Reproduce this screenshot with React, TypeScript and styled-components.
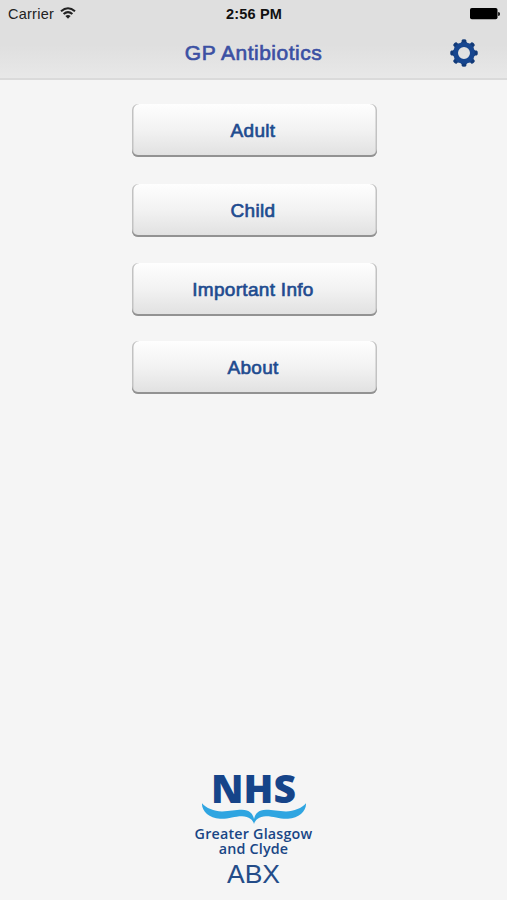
import React from "react";
import styled, { createGlobalStyle } from "styled-components";

const GlobalStyle = createGlobalStyle`
  * { box-sizing: border-box; }
  html, body { margin: 0; padding: 0; background: #f5f5f5; }
  body { font-family: "Liberation Sans", Arial, sans-serif; }
`;

const Screen = styled.div`
  width: 507px;
  height: 900px;
  display: flex;
  flex-direction: column;
  background: #f5f5f5;
  overflow: hidden;
`;

const Header = styled.header`
  height: 80px;
  flex: none;
  background: linear-gradient(#dfdfdf 0, #dfdfdf 45px, #e8e8e8 78px);
  border-bottom: 2px solid #dadada;
`;

const StatusBar = styled.div`
  height: 27px;
  padding: 1px 7px 0 8px;
  display: grid;
  grid-template-columns: 1fr auto 1fr;
  align-items: center;
  font-size: 14.5px;
  line-height: 26px;
`;

const Carrier = styled.div`
  display: flex;
  align-items: center;
  gap: 6px;
  color: #222;
  letter-spacing: 0.25px;

  svg {
    margin-bottom: 2px;
  }
`;

const Clock = styled.div`
  font-weight: 700;
  color: #111;
  letter-spacing: 0.2px;
`;

const BatterySlot = styled.div`
  display: flex;
  justify-content: flex-end;
`;

const NavBar = styled.div`
  height: 51px;
  padding: 0 29px 2px 29px;
  display: grid;
  grid-template-columns: 1fr auto 1fr;
  align-items: center;
`;

const Title = styled.h1`
  grid-column: 2;
  margin: 0;
  padding-top: 1px;
  font-size: 21px;
  line-height: 50px;
  font-weight: 400;
  letter-spacing: 0.5px;
  color: #3b50a3;
  -webkit-text-stroke: 0.65px #3b50a3;
`;

const SettingsButton = styled.button`
  justify-self: end;
  display: flex;
  padding: 0;
  border: 0;
  background: none;
`;

const Menu = styled.nav`
  flex: 1;
  display: flex;
  flex-direction: column;
  align-items: center;
  padding-top: 24px;
`;

const MenuButton = styled.button<{ $gap: number }>`
  width: 245px;
  height: 53px;
  margin-bottom: ${(p) => p.$gap}px;
  margin-left: 1px;
  padding: 0 2px 0 0;
  border: 0;
  border-radius: 6px;
  background: linear-gradient(#fefefe, #f2f2f2 50%, #e0e0e0);
  box-shadow: inset 0 -2px 0 #929292, inset 1.5px 0 0.5px #c2c2c2, inset -1.5px 0 0.5px #c2c2c2;
  font-family: inherit;
  font-size: 19px;
  line-height: 53px;
  letter-spacing: 0.3px;
  color: #1e4b8f;
  -webkit-text-stroke: 0.65px #1e4b8f;
`;

const Brand = styled.footer`
  height: 133px;
  flex: none;
  display: flex;
  flex-direction: column;
  align-items: center;
  color: #194685;
`;

const Nhs = styled.div`
  height: 36px;
  font: 800 39px/42px "Open Sans", sans-serif;
  letter-spacing: 0.1px;
  color: #164489;
`;

const Board = styled.div`
  margin-top: 1px;
  display: flex;
  flex-direction: column;
  align-items: center;
  font: 600 14.3px/15px "Open Sans", sans-serif;
  letter-spacing: 0.2px;
`;

const AppCode = styled.div`
  font-size: 26.5px;
  line-height: 36px;
  color: #244c88;
`;

const buttons = [
  { label: "Adult", gap: 27 },
  { label: "Child", gap: 26 },
  { label: "Important Info", gap: 25 },
  { label: "About", gap: 0 },
];

const WifiIcon = () => (
  <svg width="16" height="12" viewBox="0 0 16 12" fill="none" stroke="#222" strokeWidth="2.1">
    <path d="M1 4.2Q8-1.700 15 4.200" />
    <path d="M3.6 7Q8 3.200 12.400 7" />
    <path d="M8 11.700 5.400 9Q8 6.800 10.600 9Z" fill="#222" stroke="none" />
  </svg>
);

const BatteryIcon = () => (
  <svg width="30" height="12" viewBox="0 0 30 12">
    <rect x="0" y="0" width="27.5" height="11.2" rx="1.8" />
    <path d="M28.2 4Q30 4.200 30 6T28.200 8Z" />
  </svg>
);

const GearIcon = () => (
  <svg width="28" height="28" viewBox="-14 -14 28 28">
    <g fill="#123a78">
      {[0, 45, 90, 135, 180, 225, 270, 315].map((a) => (
        <path key={a} transform={`rotate(${a})`} d="M-4.2-8 -2.4-11.2V-12.6Q-2.2-13.8 0-13.8T2.4-12.6V-11.2L4.2-8Z" />
      ))}
    </g>
    <circle r="8.4" fill="none" stroke="#17468f" strokeWidth="4.8" />
  </svg>
);

const Swash = () => (
  <svg width="106" height="22" viewBox="0 0 106 22" fill="#2fa5e1">
    <path d="M1 .3C5 5 13 8.400 21 8.400C29 8.400 34 6.800 41 6.800C48.500 6.800 52 11 53 16C54 11 57.500 6.800 65 6.800C72 6.800 77 8.400 85 8.400C93 8.400 101 5 105 .3C105.500 8 98 15.200 87 15.700C78 16 73 13.200 65 13.200C58 13.200 54 17 53 21C52 17 48 13.200 41 13.200C33 13.200 28 16 19 15.700C8 15.200 .5 8 1 .3Z" />
  </svg>
);

export default function App() {
  return (
    <>
      <GlobalStyle />
      <Screen>
        <Header>
          <StatusBar>
            <Carrier>Carrier <WifiIcon /></Carrier>
            <Clock>2:56 PM</Clock>
            <BatterySlot><BatteryIcon /></BatterySlot>
          </StatusBar>
          <NavBar>
            <Title>GP Antibiotics</Title>
            <SettingsButton aria-label="Settings"><GearIcon /></SettingsButton>
          </NavBar>
        </Header>
        <Menu>
          {buttons.map((b) => (
            <MenuButton key={b.label} $gap={b.gap}>{b.label}</MenuButton>
          ))}
        </Menu>
        <Brand>
          <Nhs>NHS</Nhs>
          <Swash />
          <Board>
            <span>Greater Glasgow</span>
            <span>and Clyde</span>
          </Board>
          <AppCode>ABX</AppCode>
        </Brand>
      </Screen>
    </>
  );
}
